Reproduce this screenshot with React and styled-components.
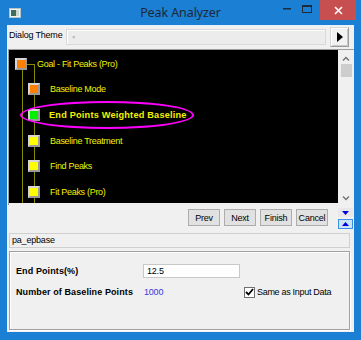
import React from "react";
import styled, { createGlobalStyle } from "styled-components";

const GlobalStyle = createGlobalStyle`
  html, body {
    margin: 0;
    padding: 0;
    background: #1b7fd3;
  }
  * {
    box-sizing: border-box;
  }
`;

const treeItems = [
  { label: "Goal - Fit Peaks (Pro)", level: 0, color: "#ff8000" },
  { label: "Baseline Mode", level: 1, color: "#ff8000" },
  { label: "End Points Weighted Baseline", level: 1, color: "#00f000", active: true },
  { label: "Baseline Treatment", level: 1, color: "#ffff00" },
  { label: "Find Peaks", level: 1, color: "#ffff00" },
  { label: "Fit Peaks (Pro)", level: 1, color: "#ffff00" },
];

const App = () => {
  return (
    <>
      <GlobalStyle />
      <Frame>
        <TitleBar>
          <TitleLeft>
            <svg width="12" height="10" viewBox="0 0 12 10">
              <rect x="0.5" y="0.5" width="11" height="9" fill="#f4f4f4" stroke="#b8c4cc" />
              <rect x="2" y="2" width="5" height="6" fill="#3f6f5a" />
              <rect x="7" y="2" width="3" height="6" fill="#c8d8d0" />
            </svg>
          </TitleLeft>
          <Title>Peak Analyzer</Title>
          <Controls>
            <CtrlButton>
              <svg width="8" height="2" viewBox="0 0 8 2">
                <rect width="8" height="1.5" fill="#1d2b3a" />
              </svg>
            </CtrlButton>
            <CtrlButton>
              <svg width="10" height="8" viewBox="0 0 10 8">
                <rect x="0.5" y="0.5" width="9" height="7" fill="none" stroke="#1d2b3a" />
                <rect x="0.5" y="0.5" width="9" height="1.5" fill="#1d2b3a" />
              </svg>
            </CtrlButton>
            <CloseButton>
              <svg width="9" height="9" viewBox="0 0 9 9">
                <path d="M1 1 L8 8 M8 1 L1 8" stroke="#fff" strokeWidth="1.6" />
              </svg>
            </CloseButton>
          </Controls>
        </TitleBar>

        <Client>
          <ThemeRow>
            <Label>Dialog Theme</Label>
            <Combo>
              <ComboMark>×</ComboMark>
            </Combo>
            <ArrowButton>
              <svg width="6" height="10" viewBox="0 0 6 10">
                <path d="M0 0 L6 5 L0 10 Z" fill="#000" />
              </svg>
            </ArrowButton>
          </ThemeRow>

          <TreeFrame>
            <TreeCanvas>
              <Lines width="40" height="153" viewBox="0 0 40 153">
                <path d="M13.5 20 V153 M18 14.5 H25.5 M25.5 14 V153" stroke="#8a8a00" strokeWidth="1" fill="none" />
              </Lines>
              <TreeList>
                {treeItems.map((item) => (
                  <TreeRow key={item.label} $level={item.level}>
                    <NodeBox $fill={item.color} />
                    <NodeText $active={item.active}>{item.label}</NodeText>
                  </TreeRow>
                ))}
              </TreeList>
              <Ring />
            </TreeCanvas>
            <ScrollBar>
              <svg width="8" height="5" viewBox="0 0 8 5">
                <path d="M1 4.5 L4 1.5 L7 4.5" stroke="#707070" strokeWidth="1.3" fill="none" />
              </svg>
              <Thumb />
              <ScrollSpacer />
              <svg width="8" height="5" viewBox="0 0 8 5">
                <path d="M1 0.5 L4 3.5 L7 0.5" stroke="#707070" strokeWidth="1.3" fill="none" />
              </svg>
            </ScrollBar>
          </TreeFrame>

          <ButtonRow>
            <NavButton>Prev</NavButton>
            <NavButton>Next</NavButton>
            <NavButton>Finish</NavButton>
            <NavButton>Cancel</NavButton>
            <Arrows>
              <SmallArrow>
                <svg width="7" height="4" viewBox="0 0 7 4">
                  <path d="M0 0 H7 L3.5 4 Z" fill="#0000e0" />
                </svg>
              </SmallArrow>
              <SmallArrow $pressed>
                <svg width="7" height="4" viewBox="0 0 7 4">
                  <path d="M0 4 H7 L3.5 0 Z" fill="#0000e0" />
                </svg>
              </SmallArrow>
            </Arrows>
          </ButtonRow>

          <NameField>pa_epbase</NameField>

          <Group>
            <FormGrid>
              <FieldLabel>End Points(%)</FieldLabel>
              <TextInput>12.5</TextInput>
              <span />
              <FieldLabel>Number of Baseline Points</FieldLabel>
              <Value>1000</Value>
              <CheckWrap>
                <CheckBox>
                  <svg width="9" height="8" viewBox="0 0 9 8">
                    <path d="M1 4 L3.5 6.5 L8 1" stroke="#000" strokeWidth="1.8" fill="none" />
                  </svg>
                </CheckBox>
                <CheckLabel>Same as Input Data</CheckLabel>
              </CheckWrap>
            </FormGrid>
          </Group>
        </Client>
      </Frame>
    </>
  );
};

export default App;

const Frame = styled.div`
  width: 361px;
  height: 340px;
  background: #1b7fd3;
  display: flex;
  flex-direction: column;
  font-family: "Liberation Sans", Arial, sans-serif;
`;

const TitleBar = styled.div`
  height: 25px;
  display: grid;
  grid-template-columns: 1fr auto 1fr;
  align-items: start;
`;

const TitleLeft = styled.div`
  padding: 8px 0 0 9px;
  display: flex;
`;

const Title = styled.div`
  font-family: "Noto Sans", "Liberation Sans", sans-serif;
  font-size: 12.5px;
  color: #1e2935;
  line-height: 14px;
  padding-top: 6px;
  letter-spacing: -0.1px;
`;

const Controls = styled.div`
  display: flex;
  justify-content: flex-end;
  align-items: flex-start;
  padding-right: 5px;
`;

const CtrlButton = styled.div`
  width: 20px;
  height: 20px;
  display: flex;
  align-items: center;
  justify-content: center;
  padding-bottom: 3px;
`;

const CloseButton = styled.div`
  width: 36px;
  height: 20px;
  margin-left: 3px;
  background: #c74f4f;
  display: flex;
  align-items: center;
  justify-content: center;
`;

const Client = styled.div`
  flex: 1;
  margin: 0 7px 8px 7px;
  background: #f0f0f0;
  border-top: 1px solid #e8f0f8;
  display: flex;
  flex-direction: column;
`;

const ThemeRow = styled.div`
  display: flex;
  align-items: flex-start;
  height: 23px;
  padding: 1px 5px 0 2px;
`;

const Label = styled.div`
  font-size: 9px;
  letter-spacing: -0.2px;
  color: #000;
  width: 57px;
  padding-top: 3px;
`;

const Combo = styled.div`
  flex: 1;
  height: 16px;
  margin-top: 2px;
  background: #ececec;
  border: 1px solid #d9d9d9;
  box-shadow: inset 1px 1px 0 #ffffff;
  font-size: 6px;
  color: #9a9a9a;
  display: flex;
  align-items: center;
  padding-left: 5px;
`;

const ComboMark = styled.span`
  line-height: 1;
`;

const ArrowButton = styled.div`
  width: 19px;
  height: 20px;
  margin-left: 4px;
  background: #f2f2f2;
  border: 1px solid #9c9c9c;
  border-top-color: #d8d8d8;
  border-left-color: #d8d8d8;
  box-shadow: inset 1px 1px 0 #ffffff, inset -1px -1px 0 #c8c8c8;
  display: flex;
  align-items: center;
  justify-content: center;
  padding-left: 1px;
`;

const TreeFrame = styled.div`
  height: 156px;
  margin-left: 1px;
  display: flex;
  border-top: 1px solid #9c9c9c;
  border-left: 1px solid #9c9c9c;
`;

const TreeCanvas = styled.div`
  position: relative;
  width: 329px;
  height: 153px;
  background: #000;
  overflow: hidden;
`;

const Lines = styled.svg`
  position: absolute;
  left: 0;
  top: 0;
`;

const TreeList = styled.div`
  position: relative;
  padding-top: 1px;
  display: flex;
  flex-direction: column;
`;

const TreeRow = styled.div`
  height: 25.6px;
  display: flex;
  align-items: center;
  padding-left: ${(p) => (p.$level === 0 ? 6 : 19)}px;
`;

const NodeBox = styled.div`
  width: 12px;
  height: 12px;
  flex: none;
  background: ${(p) => p.$fill};
  border: 2px solid #d6d6d6;
  border-right-color: #9a9a9a;
  border-bottom-color: #9a9a9a;
`;

const NodeText = styled.span`
  margin-left: ${(p) => (p.$active ? 9 : 10)}px;
  font-size: ${(p) => (p.$active ? 9.2 : 9)}px;
  font-weight: ${(p) => (p.$active ? 700 : 400)};
  letter-spacing: ${(p) => (p.$active ? 0.2 : -0.3)}px;
  color: #f2f200;
  white-space: nowrap;
`;

const Ring = styled.div`
  position: absolute;
  left: 11px;
  top: 51px;
  width: 174px;
  height: 28px;
  border: 2px solid #ff00ff;
  border-radius: 50%;
`;

const ScrollBar = styled.div`
  flex: 1;
  background: #f0f0f0;
  display: flex;
  flex-direction: column;
  align-items: center;
  padding: 6px 2px 4px 2px;
`;

const Thumb = styled.div`
  width: 11px;
  height: 13px;
  margin-top: 3px;
  background: #cdcdcd;
`;

const ScrollSpacer = styled.div`
  flex: 1;
`;

const ButtonRow = styled.div`
  height: 28px;
  display: flex;
  align-items: flex-start;
  justify-content: flex-end;
  gap: 4px;
  padding: 3px 1px 0 0;
`;

const NavButton = styled.div`
  width: 32px;
  height: 17px;
  margin-top: 1px;
  background: #e1e1e1;
  border: 1px solid #adadad;
  font-size: 9px;
  letter-spacing: -0.2px;
  color: #000;
  display: flex;
  align-items: center;
  justify-content: center;
`;

const Arrows = styled.div`
  margin-left: 6px;
  display: flex;
  flex-direction: column;
  gap: 2px;
`;

const SmallArrow = styled.div`
  width: 15px;
  height: ${(p) => (p.$pressed ? 10 : 9)}px;
  background: ${(p) => (p.$pressed ? "#cce4f7" : "#e8e8e8")};
  border: 1px solid ${(p) => (p.$pressed ? "#3d8ee6" : "#e8e8e8")};
  display: flex;
  align-items: center;
  justify-content: center;
`;

const NameField = styled.div`
  height: 15px;
  margin: 0 4px 3px 2px;
  background: #f0f0f0;
  border: 1px solid #d0d0d0;
  font-size: 9px;
  letter-spacing: -0.2px;
  color: #000;
  line-height: 13px;
  padding-left: 2px;
`;

const Group = styled.div`
  height: 79px;
  margin: 0 4px 0 2px;
  border: 1px solid #a0a0a0;
  box-shadow: inset 1px 1px 0 #ffffff, 1px 1px 0 #ffffff;
  padding: 12px 0 0 6px;
`;

const FormGrid = styled.div`
  display: grid;
  grid-template-columns: 127px 97px auto;
  grid-auto-rows: 14px;
  row-gap: 7px;
  align-items: center;
`;

const FieldLabel = styled.span`
  font-size: 9px;
  font-weight: 700;
  color: #000;
  white-space: nowrap;
  letter-spacing: 0.1px;
`;

const TextInput = styled.div`
  height: 14px;
  background: #fff;
  border: 1px solid #c8c8c8;
  font-size: 9px;
  letter-spacing: -0.2px;
  line-height: 12px;
  padding-left: 3px;
  color: #000;
`;

const Value = styled.span`
  font-size: 9px;
  letter-spacing: -0.2px;
  color: #3a3ae0;
  padding-left: 1px;
`;

const CheckWrap = styled.div`
  display: flex;
  align-items: center;
  padding-left: 4px;
`;

const CheckBox = styled.div`
  width: 11px;
  height: 11px;
  background: #fff;
  border: 1px solid #707070;
  display: flex;
  align-items: center;
  justify-content: center;
`;

const CheckLabel = styled.span`
  margin-left: 2px;
  font-size: 9px;
  letter-spacing: -0.3px;
  color: #000;
  white-space: nowrap;
`;
